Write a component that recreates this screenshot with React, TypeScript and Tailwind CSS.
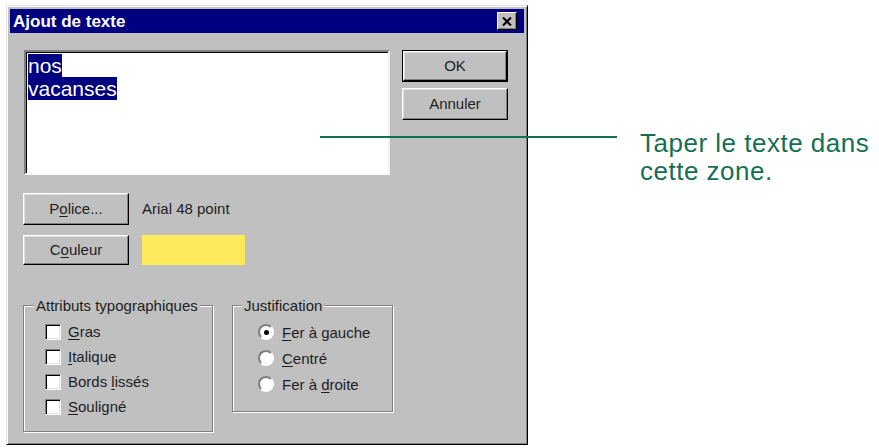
import React from "react";

function U({ children }: { children: React.ReactNode }) {
  return <span className="underline decoration-1 underline-offset-[2px]">{children}</span>;
}

function Btn({
  children,
  className = "",
  isDefault = false,
}: {
  children: React.ReactNode;
  className?: string;
  isDefault?: boolean;
}) {
  const face = (
    <div className="w-full h-full flex items-center justify-center bg-[#c0c0c0] border border-t-white border-l-white border-b-black border-r-black shadow-[inset_-1px_-1px_0_#808080,inset_1px_1px_0_#dfdfdf] text-[15px] text-[#1e1e1e]">
      {children}
    </div>
  );
  if (isDefault) {
    return <div className={`border border-black ${className}`}>{face}</div>;
  }
  return <div className={className}>{face}</div>;
}

function Check({ children }: { children: React.ReactNode }) {
  return (
    <div className="h-[25px] flex items-center">
      <div className="w-[16px] h-[16px] bg-white border border-t-[#808080] border-l-[#808080] border-b-white border-r-white shadow-[inset_1px_1px_0_#000,inset_-1px_-1px_0_#dfdfdf]" />
      <span className="ml-[7px] text-[15px] text-[#1e1e1e] leading-none">{children}</span>
    </div>
  );
}

function Radio({ children, checked = false }: { children: React.ReactNode; checked?: boolean }) {
  return (
    <div className="h-[26px] flex items-center">
      <div className="relative w-[16px] h-[16px] rounded-full bg-white border-2 border-t-[#808080] border-l-[#808080] border-b-white border-r-white flex items-center justify-center">
        {checked && <div className="w-[5px] h-[5px] rounded-full bg-black" />}
      </div>
      <span className="ml-[8px] text-[15px] text-[#1e1e1e] leading-none">{children}</span>
    </div>
  );
}

export default function App() {
  return (
    <div className="relative w-[879px] h-[448px] bg-white overflow-hidden font-['Liberation_Sans',Arial,sans-serif] flex items-start">
      {/* Dialog */}
      <div className="ml-[6px] mt-[5px] w-[522px] h-[440px] shrink-0 bg-[#c0c0c0] border border-t-[#dfdfdf] border-l-[#dfdfdf] border-b-black border-r-black shadow-[inset_1px_1px_0_#fff,inset_-1px_-1px_0_#808080] p-[3px] flex flex-col">
        {/* Title bar */}
        <div className="h-[24px] shrink-0 bg-[#000080] flex items-center pl-[3px] pr-[7px]">
          <span className="text-white font-bold text-[17px] leading-none">Ajout de texte</span>
          <div className="ml-auto w-[20px] h-[18px] bg-[#c0c0c0] border border-t-white border-l-white border-b-black border-r-black shadow-[inset_-1px_-1px_0_#808080] flex items-center justify-center">
            <svg width="10" height="9" viewBox="0 0 10 9">
              <path d="M1 0.5 L9 8.5 M9 0.5 L1 8.5" stroke="#000" strokeWidth="2" />
            </svg>
          </div>
        </div>

        {/* Body */}
        <div className="flex flex-col pl-[13px]">
          {/* Row 1 */}
          <div className="mt-[17px] flex items-start">
            <div className="ml-[1px] w-[366px] h-[125px] bg-white border-2 border-t-[#808080] border-l-[#808080] border-b-white border-r-[#f0f0f0] shadow-[inset_1px_1px_0_#000] pl-[2px] pt-[2px]">
              <div className="text-[21px] leading-[23px]">
                <span className="bg-[#000080] text-white">nos</span>
              </div>
              <div className="text-[21px] leading-[23px]">
                <span className="bg-[#000080] text-white">vacanses</span>
              </div>
            </div>
            <div className="ml-[12px] w-[106px] flex flex-col gap-[6px]">
              <Btn isDefault className="h-[32px]">OK</Btn>
              <Btn className="h-[32px]">Annuler</Btn>
            </div>
          </div>

          {/* Row 2 */}
          <div className="mt-[18px] flex items-center">
            <Btn className="w-[106px] h-[32px]">
              <span>
                P<U>o</U>lice...
              </span>
            </Btn>
            <span className="ml-[13px] text-[15px] text-[#1e1e1e]">Arial 48 point</span>
          </div>

          {/* Row 3 */}
          <div className="mt-[10px] flex items-center">
            <Btn className="w-[106px] h-[30px]">
              <span>
                C<U>o</U>uleur
              </span>
            </Btn>
            <div className="ml-[13px] w-[103px] h-[30px] bg-[#fdea5c]" />
          </div>

          {/* Row 4 */}
          <div className="mt-[32px] flex items-start">
            <fieldset className="w-[190px] h-[135px] m-0 p-0 min-w-0 border border-[#808080] shadow-[inset_1px_1px_0_#fff,1px_1px_0_#fff]">
              <legend className="ml-[10px] px-[2px] text-[15px] leading-[17px] text-[#1e1e1e] bg-[#c0c0c0]">
                Attributs typographiques
              </legend>
              <div className="flex flex-col pl-[21px] pt-[5px]">
                <Check>
                  <U>G</U>ras
                </Check>
                <Check>
                  <U>I</U>talique
                </Check>
                <Check>
                  Bords <U>l</U>issés
                </Check>
                <Check>
                  <U>S</U>ouligné
                </Check>
              </div>
            </fieldset>

            <fieldset className="ml-[19px] w-[161px] h-[115px] m-0 p-0 min-w-0 border border-[#808080] shadow-[inset_1px_1px_0_#fff,1px_1px_0_#fff]">
              <legend className="ml-[9px] px-[2px] text-[15px] leading-[17px] text-[#1e1e1e] bg-[#c0c0c0]">
                Justification
              </legend>
              <div className="flex flex-col pl-[25px] pt-[5px]">
                <Radio checked>
                  <U>F</U>er à gauche
                </Radio>
                <Radio>
                  <U>C</U>entré
                </Radio>
                <Radio>
                  Fer à <U>d</U>roite
                </Radio>
              </div>
            </fieldset>
          </div>
        </div>
      </div>

      {/* Annotation text */}
      <div className="ml-[112px] mt-[129px] text-[26px] leading-[28px] tracking-[0.5px] text-[#137052] whitespace-nowrap">
        Taper le texte dans
        <br />
        cette zone.
      </div>

      {/* Annotation line (over the dialog) */}
      <div className="absolute left-[320px] top-[136px] w-[297px] h-[2px] bg-[#137052]" />
    </div>
  );
}
